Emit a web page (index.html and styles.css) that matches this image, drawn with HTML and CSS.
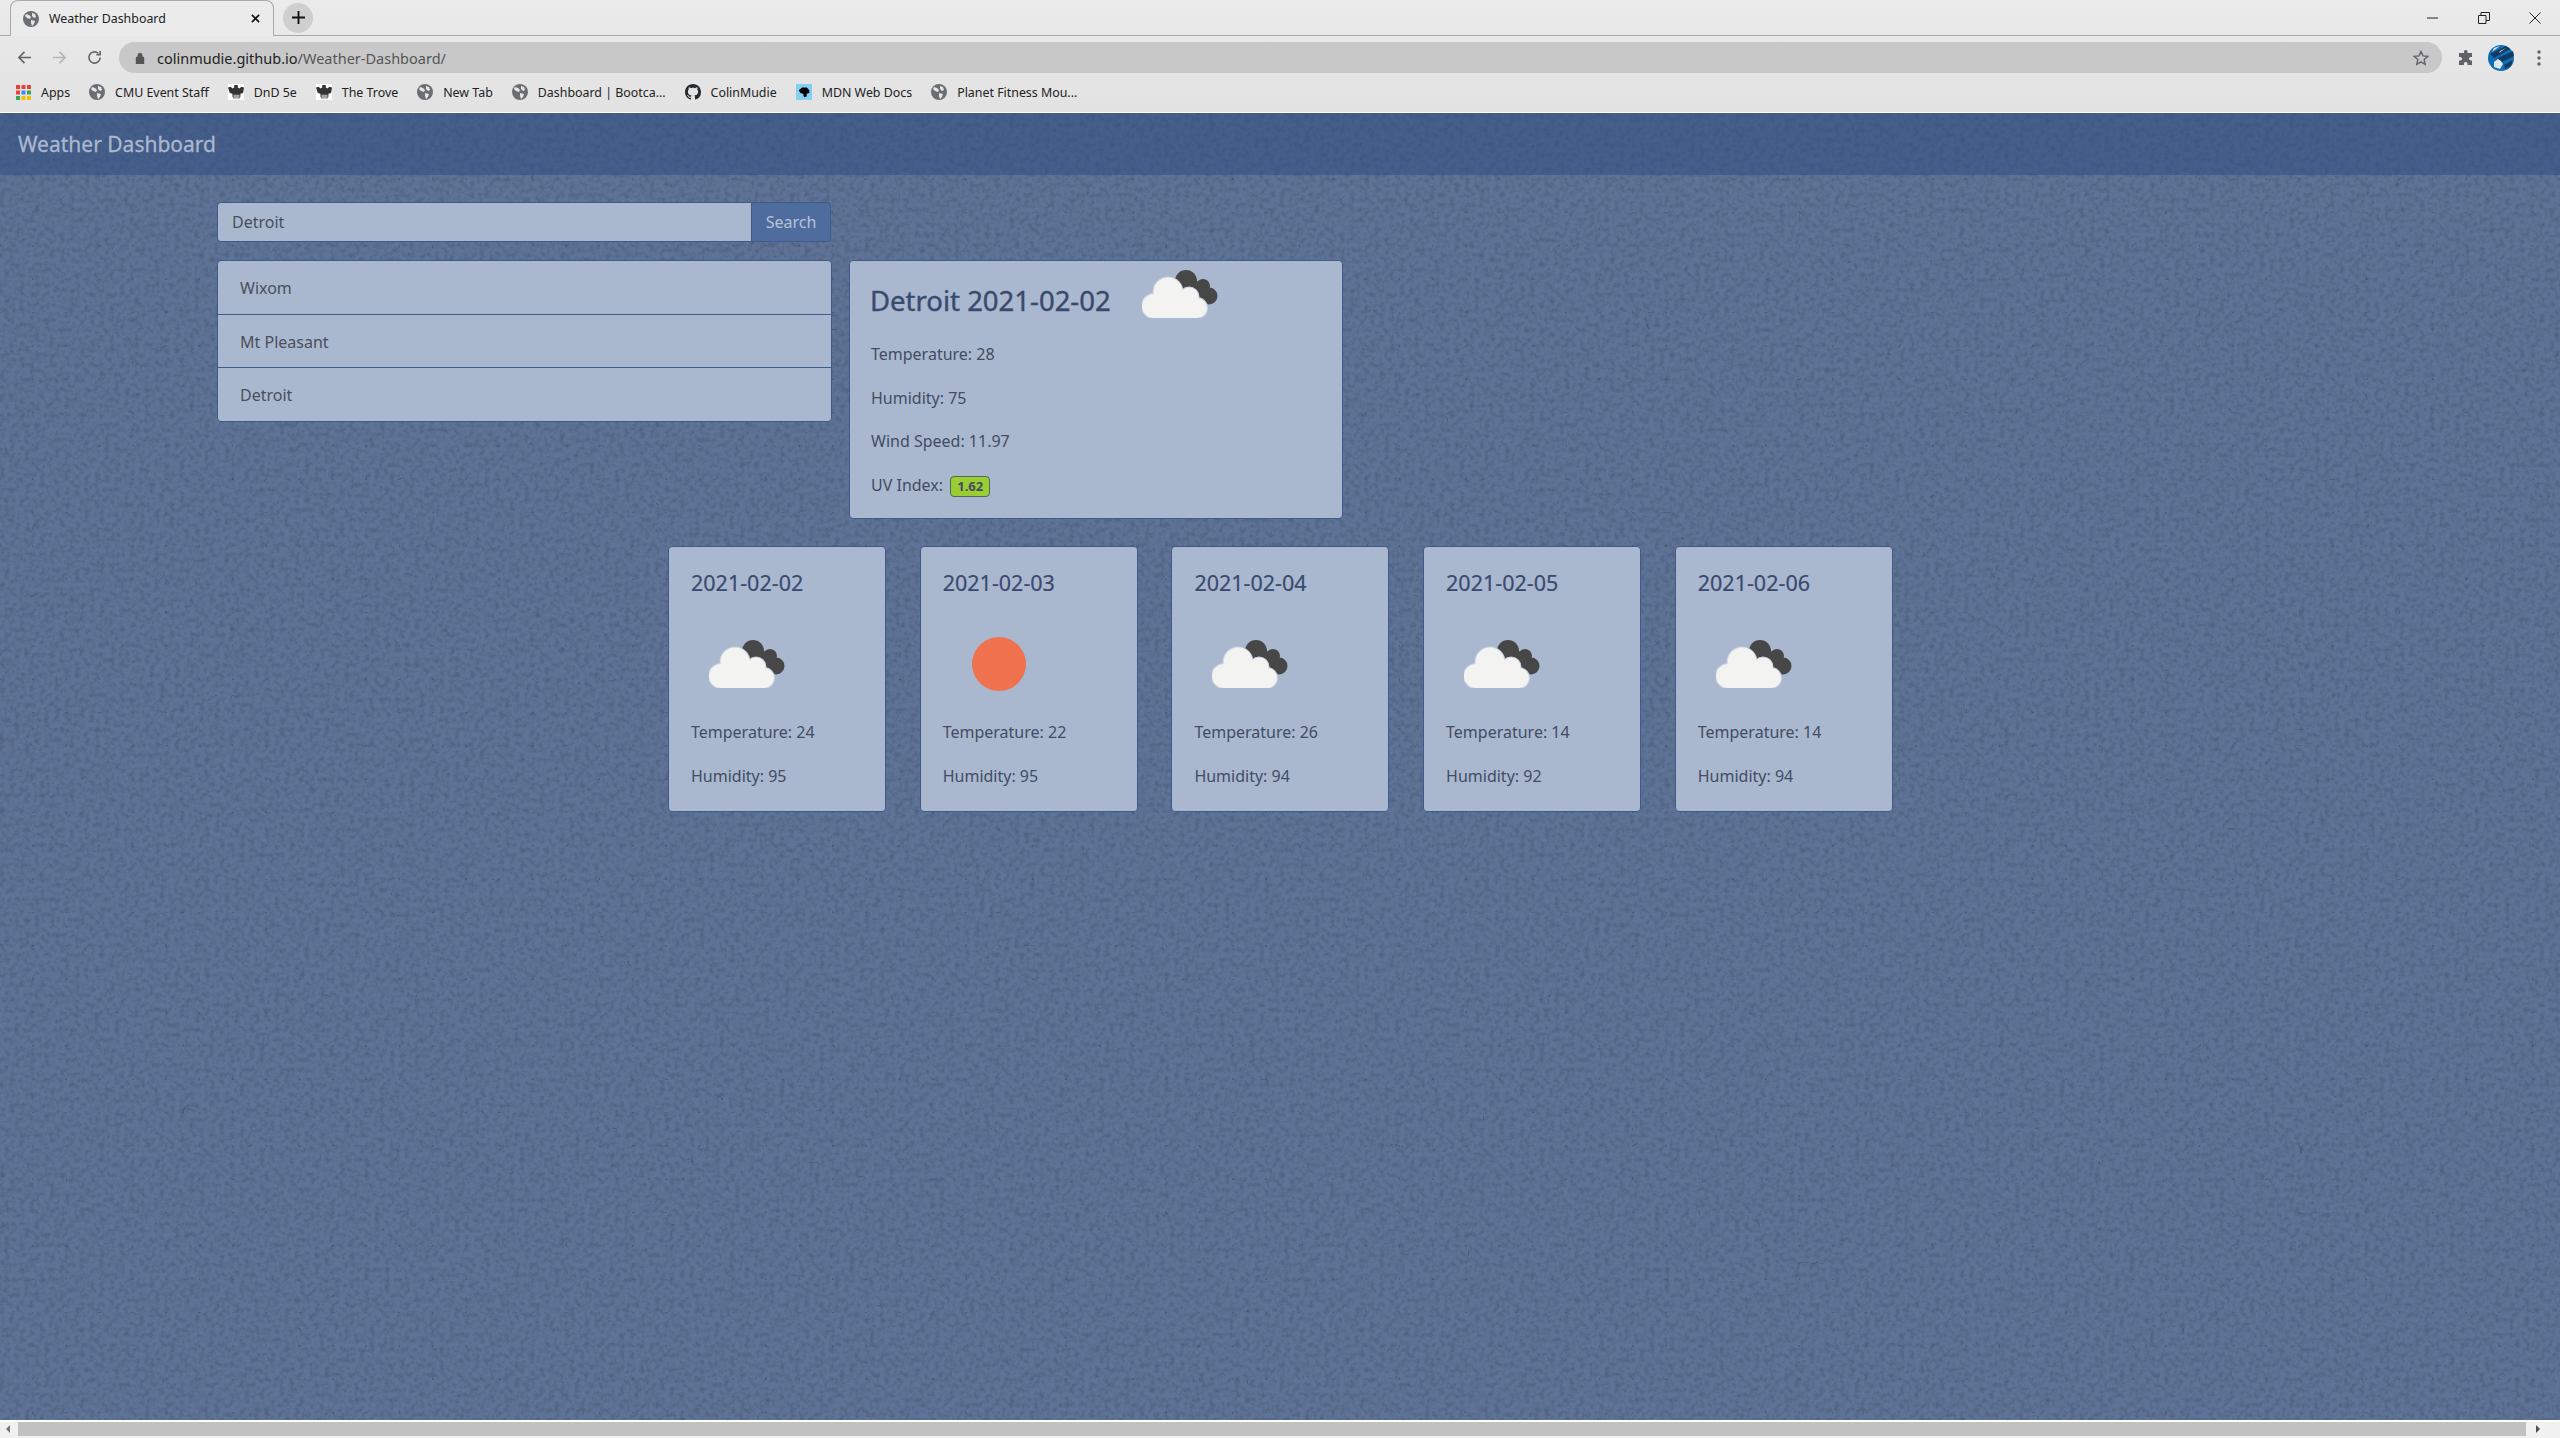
FILE: index.html
```html
<!DOCTYPE html>
<html lang="en">
<head>
    <meta charset="UTF-8">
    <title>Weather Dashboard</title>
    <link rel="stylesheet" href="styles.css">
</head>
<body>
<svg class="defs" width="0" height="0">
    <symbol id="globe" viewBox="0 0 16 16">
        <circle cx="8" cy="8" r="8" fill="#6b6e73"/>
        <path d="M3 3l3 1 2 2-1 2-3-1-2-2zM9 2l3 1 1 3-2 1-2-2zM8 9l4 1-1 3-2 2-1-3z" fill="#e6e6e6"/>
    </symbol>
    <symbol id="gargoyle" viewBox="0 0 18 18">
        <rect width="18" height="18" fill="#fff"/>
        <path d="M0 4l3-1 2 2 2-1 0-3 4 0 0 3 2 1 2-2 3 1-1 6-3 1 0 3-1 2H6l-1-2 0-3-3-1z" fill="#333"/>
        <rect x="6" y="12" width="7" height="4" fill="#a5a5a5"/>
    </symbol>
    <symbol id="cloud" viewBox="0 0 76 48">
        <g fill="#474747">
            <circle cx="44" cy="11" r="11"/>
            <circle cx="61" cy="16" r="7"/>
            <circle cx="67" cy="26" r="8.500"/>
            <path d="M35 8L60 12 68 34 52 34z"/>
        </g>
        <g fill="#a9b8cf" stroke="#c8d1df" stroke-width="2">
            <circle cx="26" cy="22" r="14.500"/>
            <circle cx="47" cy="27" r="9.500"/>
            <circle cx="12" cy="36" r="12"/>
            <circle cx="55" cy="38" r="10"/>
        </g>
        <g fill="#f3f3f2">
            <circle cx="26" cy="22" r="14.500"/>
            <circle cx="47" cy="27" r="9.500"/>
            <circle cx="12" cy="36" r="12"/>
            <circle cx="55" cy="38" r="10"/>
            <rect x="12" y="26" width="43" height="22"/>
        </g>
    </symbol>
</svg>

<header class="browser">
    <div class="tabstrip">
        <div class="tab">
            <svg class="fav"><use href="#globe"/></svg>
            <span class="tab-title">Weather Dashboard</span>
            <svg class="tab-close" viewBox="0 0 10 10"><path d="M1 1l8 8M9 1l-8 8"/></svg>
        </div>
        <div class="new-tab">
            <svg viewBox="0 0 14 14"><path d="M7 0v14M0 7h14"/></svg>
        </div>
        <div class="win-btns">
            <svg viewBox="0 0 12 12"><path d="M0 6h11"/></svg>
            <svg viewBox="0 0 12 12"><path d="M.5 3.500h7.500v8h-7.500zM3 3.500V.5h8.500v8H8"/></svg>
            <svg viewBox="0 0 12 12"><path d="M.5.5l11 11M11.500.5l-11 11"/></svg>
        </div>
    </div>
    <div class="toolbar">
        <svg class="nav-icon" viewBox="0 0 16 16"><path d="M15 8H2M8 2L2 8l6 6"/></svg>
        <svg class="nav-icon nav-off" viewBox="0 0 16 16"><path d="M1 8h13M8 2l6 6-6 6"/></svg>
        <svg class="nav-icon" viewBox="0 0 16 16"><path d="M14 8a6 6 0 1 1-2-4.500M14 1v4h-4"/></svg>
        <div class="omnibox">
            <svg class="lock" viewBox="0 0 10 12"><path d="M1 5h8v7H1zM2.800 5V3.200a2.200 2.200 0 0 1 4.400 0V5" /></svg>
            <span class="url"><span class="url-host">colinmudie.github.io</span>/Weather-Dashboard/</span>
            <svg class="star" viewBox="0 0 16 16"><path d="M8 1.500l2 4.400 4.800.5-3.600 3.200 1 4.700L8 11.900l-4.200 2.400 1-4.700L1.200 6.400 6 5.900z"/></svg>
        </div>
        <svg class="puzzle" viewBox="0 0 16 16"><path d="M6 1.500a1.800 1.800 0 0 1 3.500 0V3H14v4h-1.200a1.800 1.800 0 0 0 0 3.600H14V15H9.500v-1.200a1.800 1.800 0 0 0-3.600 0V15H1v-4.400h1.300a1.800 1.800 0 0 0 0-3.600H1V3h5z"/></svg>
        <svg class="avatar" viewBox="0 0 26 26">
            <circle cx="13" cy="13" r="13" fill="#0f6fb5"/>
            <path d="M2 9L18 1l4 3L6 13zM10 13L25 6l1 5-14 7zM16 20l9-5-2 6-6 3z" fill="#123a63"/>
            <path d="M6 3l6-2-8 6zM12 6l6-3-7 5z" fill="#d5dde5"/>
            <path d="M6 17l4-3 3 2 2 3-3 5-6-2z" fill="#dfe6ec"/>
        </svg>
        <svg class="dots" viewBox="0 0 4 16"><circle cx="2" cy="2" r="1.700"/><circle cx="2" cy="8" r="1.700"/><circle cx="2" cy="14" r="1.700"/></svg>
    </div>
    <div class="bookmarks">
        <div class="mark">
            <svg class="fav apps" viewBox="0 0 15 15">
                <rect width="4" height="4" fill="#ea4335"/><rect x="5.500" width="4" height="4" fill="#ea4335"/><rect x="11" width="4" height="4" fill="#ea4335"/>
                <rect y="5.500" width="4" height="4" fill="#ea4335"/><rect x="5.500" y="5.500" width="4" height="4" fill="#4285f4"/><rect x="11" y="5.500" width="4" height="4" fill="#34a853"/>
                <rect y="11" width="4" height="4" fill="#34a853"/><rect x="5.500" y="11" width="4" height="4" fill="#fbbc05"/><rect x="11" y="11" width="4" height="4" fill="#fbbc05"/>
            </svg>
            Apps
        </div>
        <div class="mark"><svg class="fav"><use href="#globe"/></svg>CMU Event Staff</div>
        <div class="mark"><svg class="fav"><use href="#gargoyle"/></svg>DnD 5e</div>
        <div class="mark"><svg class="fav"><use href="#gargoyle"/></svg>The Trove</div>
        <div class="mark"><svg class="fav"><use href="#globe"/></svg>New Tab</div>
        <div class="mark"><svg class="fav"><use href="#globe"/></svg>Dashboard | Bootca...</div>
        <div class="mark">
            <svg class="fav" viewBox="0 0 16 16"><path fill="#24292e" d="M8 0C3.580 0 0 3.580 0 8c0 3.540 2.290 6.530 5.470 7.590.4.070.55-.17.55-.38 0-.19-.01-.82-.01-1.490-2.010.37-2.530-.49-2.690-.94-.09-.23-.48-.94-.82-1.130-.28-.15-.68-.52-.01-.53.630-.01 1.080.58 1.230.82.720 1.210 1.870.87 2.330.66.070-.52.280-.87.510-1.070-1.780-.2-3.640-.89-3.640-3.950 0-.87.310-1.590.820-2.150-.08-.2-.36-1.020.08-2.120 0 0 .67-.21 2.200.82.640-.18 1.320-.27 2-.27s1.360.09 2 .27c1.530-1.040 2.200-.82 2.200-.82.440 1.100.160 1.920.080 2.120.51.560.82 1.270.82 2.150 0 3.070-1.870 3.750-3.650 3.950.29.250.54.730.54 1.480 0 1.070-.01 1.930-.01 2.200 0 .21.150.46.550.38A8.010 8.010 0 0 0 16 8c0-4.420-3.580-8-8-8z"/></svg>
            ColinMudie
        </div>
        <div class="mark">
            <svg class="fav" viewBox="0 0 18 18"><rect width="18" height="18" fill="#83d0f2"/><path d="M3 7l4-3 5 0 3 3 0 3-3 1 0 3-3 1-1-4-3-1z" fill="#000"/></svg>
            MDN Web Docs
        </div>
        <div class="mark"><svg class="fav"><use href="#globe"/></svg>Planet Fitness Mou...</div>
    </div>
</header>

<div class="page">
    <svg class="texture" width="100%" height="100%">
        <filter id="mottle" x="0" y="0" width="100%" height="100%" color-interpolation-filters="sRGB">
            <feTurbulence type="fractalNoise" baseFrequency="0.2" numOctaves="4" seed="7"/>
            <feColorMatrix type="matrix" values="0 0 0 0 .26  0 0 0 0 .33  0 0 0 0 .45  0 1.200 0 0 -.48"/>
        </filter>
        <filter id="fibres" x="0" y="0" width="100%" height="100%" color-interpolation-filters="sRGB">
            <feTurbulence type="turbulence" baseFrequency="0.03" numOctaves="3" seed="11"/>
            <feColorMatrix type="matrix" values="0 0 0 0 .20  0 0 0 0 .26  0 0 0 0 .36  -9 0 0 0 .38"/>
        </filter>
        <rect width="100%" height="100%" filter="url(#mottle)"/>
        <rect width="100%" height="100%" filter="url(#fibres)"/>
    </svg>

    <nav class="navbar">Weather Dashboard</nav>

    <main class="content">
        <form class="search">
            <input class="search-input" type="text" value="Detroit">
            <button class="search-btn" type="button">Search</button>
        </form>

        <div class="top-row">
            <ul class="cities">
                <li>Wixom</li>
                <li>Mt Pleasant</li>
                <li>Detroit</li>
            </ul>
            <section class="card today">
                <div class="today-head">
                    <h2>Detroit 2021-02-02</h2>
                    <svg class="cloud"><use href="#cloud"/></svg>
                </div>
                <p>Temperature: 28</p>
                <p>Humidity: 75</p>
                <p>Wind Speed: 11.97</p>
                <p>UV Index: <span class="uv">1.62</span></p>
            </section>
        </div>

        <div class="forecast">
            <section class="card day">
                <h3>2021-02-02</h3>
                <div class="day-icon"><svg class="cloud"><use href="#cloud"/></svg></div>
                <p>Temperature: 24</p>
                <p>Humidity: 95</p>
            </section>
            <section class="card day">
                <h3>2021-02-03</h3>
                <div class="day-icon"><div class="sun"></div></div>
                <p>Temperature: 22</p>
                <p>Humidity: 95</p>
            </section>
            <section class="card day">
                <h3>2021-02-04</h3>
                <div class="day-icon"><svg class="cloud"><use href="#cloud"/></svg></div>
                <p>Temperature: 26</p>
                <p>Humidity: 94</p>
            </section>
            <section class="card day">
                <h3>2021-02-05</h3>
                <div class="day-icon"><svg class="cloud"><use href="#cloud"/></svg></div>
                <p>Temperature: 14</p>
                <p>Humidity: 92</p>
            </section>
            <section class="card day">
                <h3>2021-02-06</h3>
                <div class="day-icon"><svg class="cloud"><use href="#cloud"/></svg></div>
                <p>Temperature: 14</p>
                <p>Humidity: 94</p>
            </section>
        </div>
    </main>
</div>

<div class="hscroll">
    <span class="arrow-left"></span>
    <div class="thumb"></div>
    <span class="arrow-right"></span>
</div>
</body>
</html>
```

FILE: styles.css
```css
* {
    box-sizing: border-box;
}
html, body {
    height: 100%;
    margin: 0;
    overflow: hidden;
}
body {
    display: flex;
    flex-direction: column;
    background-color: #5f7396;
    color: #434c63;
    font-family: "Noto Sans", "Open Sans", sans-serif;
    font-size: 16px;
}
.defs {
    position: absolute;
}

/* browser chrome */
.browser {
    flex: none;
    height: 113px;
    background: linear-gradient(#ebebeb, #e2e2e2);
    border-bottom: 1px solid #fff;
    color: #222;
    font-size: 12.400px;
}
.tabstrip {
    display: flex;
    align-items: center;
    height: 36px;
    border-bottom: 1px solid #a9a9a9;
    padding-left: 10px;
}
.tab {
    display: flex;
    align-items: center;
    width: 264px;
    height: 36px;
    padding: 0 13px 0 12px;
    background-color: #ebebeb;
    border: 1px solid #a9a9a9;
    border-bottom: none;
    border-radius: 8px 8px 0 0;
    margin-top: 1px;
}
.fav {
    flex: none;
    width: 16px;
    height: 16px;
}
.tab-title {
    margin-left: 10px;
    flex: 1;
}
.tab-close {
    width: 9px;
    height: 9px;
    fill: none;
    stroke: #111;
    stroke-width: 1.800;
}
.new-tab {
    display: flex;
    align-items: center;
    justify-content: center;
    width: 30px;
    height: 30px;
    margin-left: 9px;
    background-color: #cfcfcf;
    border-radius: 50%;
}
.new-tab svg {
    width: 13px;
    height: 13px;
    fill: none;
    stroke: #111;
    stroke-width: 2;
}
.win-btns {
    display: flex;
    gap: 39px;
    margin-left: auto;
    padding-right: 19px;
}
.win-btns svg {
    width: 12px;
    height: 12px;
    fill: none;
    stroke: #222;
    stroke-width: 1;
}
.toolbar {
    display: flex;
    align-items: center;
    height: 43px;
    padding-left: 17px;
}
.nav-icon {
    width: 15px;
    height: 15px;
    margin-right: 20px;
    fill: none;
    stroke: #606368;
    stroke-width: 1.700;
}
.nav-off {
    stroke: #b4b5b7;
}
.omnibox {
    display: flex;
    align-items: center;
    width: 2323px;
    height: 31px;
    margin-left: -3px;
    padding: 0 13px 0 16px;
    background-color: #c8c8c8;
    border-radius: 16px;
    font-size: 14.500px;
    color: #555;
}
.lock {
    width: 10px;
    height: 12px;
    fill: #555;
    stroke: #555;
    stroke-width: .4;
}
.url {
    margin-left: 12px;
    flex: 1;
}
.url-host {
    color: #222;
}
.star {
    width: 16px;
    height: 16px;
    fill: none;
    stroke: #606368;
    stroke-width: 1.400;
}
.puzzle {
    width: 16px;
    height: 16px;
    margin-left: 16px;
    fill: #5f6368;
}
.avatar {
    width: 26px;
    height: 26px;
    margin-left: 14px;
}
.dots {
    width: 4px;
    height: 16px;
    margin-left: 23px;
    fill: #606368;
}
.bookmarks {
    display: flex;
    align-items: center;
    gap: 19px;
    height: 26px;
    padding-left: 16px;
}
.mark {
    display: flex;
    align-items: center;
    gap: 10px;
    white-space: nowrap;
}
.apps {
    width: 15px;
    height: 15px;
}

/* page */
.page {
    position: relative;
    flex: 1;
    min-height: 0;
    overflow: hidden;
}
.texture {
    position: absolute;
    top: 0;
    left: 0;
}
.navbar {
    position: relative;
    height: 62px;
    padding-left: 18px;
    background-color: rgba(52, 80, 130, .6);
    color: #a9b8cf;
    font-size: 21px;
    -webkit-text-stroke: .3px #a9b8cf;
    line-height: 62px;
}
.content {
    position: relative;
    padding: 27px 0 0 217px;
}
.search {
    display: flex;
    width: 614px;
    height: 40px;
    margin-bottom: 18px;
}
.search-input {
    flex: 1;
    padding: 0 14px;
    background-color: #a9b8cf;
    border: 1px solid #3f5b8c;
    border-right: none;
    border-radius: 4px 0 0 4px;
    color: #4a4f5c;
    font: inherit;
}
.search-btn {
    width: 80px;
    background-color: #4f6c9e;
    border: 1px solid #3f5b8c;
    border-radius: 0 4px 4px 0;
    color: #b6c3d8;
    font: inherit;
}
.top-row {
    display: flex;
    align-items: flex-start;
    gap: 17px;
}
.cities {
    width: 615px;
    margin: 0;
    padding: 0;
    list-style: none;
    background-color: #a9b8cf;
    border: 1px solid #3f5b8c;
    border-radius: 4px;
    color: #4a4f5c;
}
.cities li {
    height: 53.500px;
    padding-left: 22px;
    line-height: 54px;
    border-top: 1px solid #3f5b8c;
}
.cities li:first-child {
    border-top: none;
    height: 52.500px;
    line-height: 55px;
}
.card {
    background-color: #a9b8cf;
    border: 1px solid #3f5b8c;
    border-radius: 4px;
}
.card p {
    margin: 0;
    line-height: 24px;
}
.today {
    width: 494px;
    height: 259px;
    padding: 9px 21px 0;
}
.today-head {
    display: flex;
    align-items: flex-start;
    height: 62px;
    margin-bottom: 10px;
}
.today-head h2 {
    width: 272px;
    margin: 11px 0 0 -1px;
    font-size: 27.500px;
    font-weight: 400;
    -webkit-text-stroke: .4px #3a4a6e;
    line-height: 40px;
    color: #3a4a6e;
}
.cloud {
    display: block;
    width: 76px;
    height: 48px;
}
.today p {
    height: 43.600px;
}
.uv {
    display: inline-block;
    margin-left: 3px;
    padding: 0 6px;
    background-color: #9acd32;
    border: 1px solid #4d6a5a;
    border-radius: 4px;
    font-size: 13px;
    font-weight: 700;
    line-height: 19px;
    vertical-align: 0;
}
.forecast {
    display: flex;
    gap: 33.700px;
    margin: 27px 0 0 451px;
}
.day {
    width: 218px;
    height: 266px;
    padding: 20px 22px 0;
}
.day h3 {
    margin: 0;
    font-size: 21.500px;
    -webkit-text-stroke: .2px #3a4a6e;
    font-weight: 400;
    line-height: 32px;
    color: #3a4a6e;
}
.day-icon {
    display: flex;
    align-items: center;
    height: 92px;
    margin: 19px 0 10px;
    padding-left: 18px;
}
.sun {
    width: 54px;
    height: 54px;
    margin-left: 11px;
    background-color: #ef714d;
    border-radius: 50%;
}
.day p {
    height: 44px;
}

/* scrollbar along the bottom */
.hscroll {
    flex: none;
    display: flex;
    align-items: center;
    height: 18px;
    padding-bottom: 2px;
    background-color: #f1f1f1;
    border-top: 2px solid #fff;
}
.thumb {
    width: 2508px;
    height: 14px;
    margin: 0 10px 0 8px;
    background-color: #c1c1c1;
}
.arrow-left, .arrow-right {
    width: 0;
    height: 0;
    border-top: 4px solid transparent;
    border-bottom: 4px solid transparent;
}
.arrow-left {
    margin-left: 6px;
    border-right: 4px solid #777;
}
.arrow-right {
    border-left: 4px solid #505050;
}
```
